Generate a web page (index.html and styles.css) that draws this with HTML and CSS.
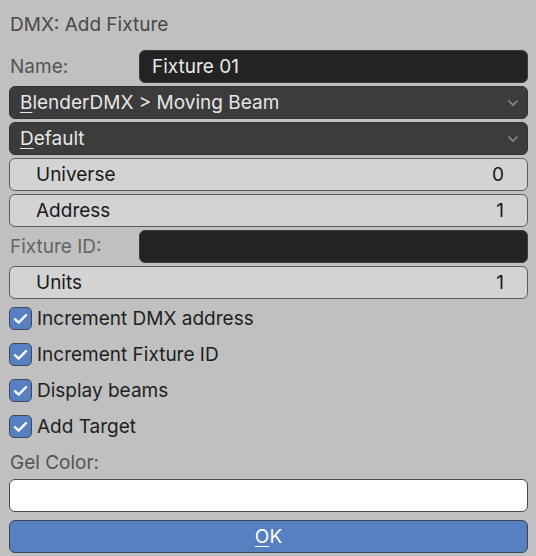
FILE: index.html
```html
<!DOCTYPE html>
<html>
<head>
<meta charset="utf-8">
<link rel="stylesheet" href="styles.css">
</head>
<body>
<div class="panel">
  <div class="title">DMX: Add Fixture</div>
  <div class="rows">
    <div class="split">
      <span class="label">Name:</span>
      <div class="field text-field">Fixture 01</div>
    </div>
    <div class="field dropdown"><span><u>B</u>lenderDMX &gt; Moving Beam</span>
      <svg class="chev" width="12" height="8" viewBox="0 0 12 8"><path d="M1.5 1.5 L6 6 L10.5 1.5" fill="none" stroke="#8a8a8a" stroke-width="1.6"/></svg>
    </div>
    <div class="field dropdown"><span><u>D</u>efault</span>
      <svg class="chev" width="12" height="8" viewBox="0 0 12 8"><path d="M1.5 1.5 L6 6 L10.5 1.5" fill="none" stroke="#8a8a8a" stroke-width="1.6"/></svg>
    </div>
    <div class="field number"><span>Universe</span><span>0</span></div>
    <div class="field number"><span>Address</span><span>1</span></div>
    <div class="split">
      <span class="label light">Fixture ID:</span>
      <div class="field text-field"></div>
    </div>
    <div class="field number"><span>Units</span><span>1</span></div>
    <label class="check"><span class="box"><svg width="15" height="12" viewBox="0 0 15 12"><path d="M2 6.2 L5.6 9.6 L13 2.2" fill="none" stroke="#fff" stroke-width="2.4" stroke-linecap="round" stroke-linejoin="round"/></svg></span>Increment DMX address</label>
    <label class="check"><span class="box"><svg width="15" height="12" viewBox="0 0 15 12"><path d="M2 6.2 L5.6 9.6 L13 2.2" fill="none" stroke="#fff" stroke-width="2.4" stroke-linecap="round" stroke-linejoin="round"/></svg></span>Increment Fixture ID</label>
    <label class="check"><span class="box"><svg width="15" height="12" viewBox="0 0 15 12"><path d="M2 6.2 L5.6 9.6 L13 2.2" fill="none" stroke="#fff" stroke-width="2.4" stroke-linecap="round" stroke-linejoin="round"/></svg></span>Display beams</label>
    <label class="check"><span class="box"><svg width="15" height="12" viewBox="0 0 15 12"><path d="M2 6.2 L5.6 9.6 L13 2.2" fill="none" stroke="#fff" stroke-width="2.4" stroke-linecap="round" stroke-linejoin="round"/></svg></span>Add Target</label>
    <div class="gel">
      <span class="label">Gel Color:</span>
      <div class="field color"></div>
    </div>
  </div>
  <div class="field ok"><span><u>O</u>K</span></div>
</div>
</body>
</html>
```

FILE: styles.css
```css
html, body {
  margin: 0;
  padding: 0;
  background: #c0c0c0;
}
body {
  font-family: Inter, "Noto Sans", sans-serif;
  font-size: 19px;
  color: #1c1c1c;
}
.panel {
  width: 536px;
  height: 556px;
  box-sizing: border-box;
  padding: 8px 8px 0 9px;
}
.title {
  height: 33px;
  line-height: 33px;
  padding-left: 1px;
  color: #4a4a4a;
  margin-bottom: 9px;
}
.rows {
  display: flex;
  flex-direction: column;
  gap: 3px;
}
.split {
  display: grid;
  grid-template-columns: 130px 1fr;
  height: 33px;
}
.label {
  display: flex;
  align-items: center;
  padding-left: 1px;
  color: #545454;
  height: 33px;
}
.label.light {
  color: #646464;
}
.field {
  height: 33px;
  box-sizing: border-box;
  border-radius: 6px;
  display: flex;
  align-items: center;
}
.text-field {
  background: #232323;
  border: 1px solid #3c3c3c;
  color: #e8e8e8;
  padding-left: 12px;
}
.dropdown {
  background: #3c3c3c;
  border: 1px solid #333;
  color: #e6e6e6;
  padding: 0 8px 0 10px;
  justify-content: space-between;
}
.dropdown u, .ok u {
  text-underline-offset: 3px;
  text-decoration-thickness: 1px;
}
.chev {
  margin-top: 1px;
}
.number {
  background: #d3d3d3;
  border: 1px solid #5c5c5c;
  justify-content: space-between;
  padding: 0 23px 0 26px;
  color: #1a1a1a;
}
.check {
  display: flex;
  align-items: center;
  gap: 5px;
  height: 33px;
  color: #1f1f1f;
}
.box {
  width: 23px;
  height: 23px;
  box-sizing: border-box;
  border-radius: 5px;
  background: #5680c2;
  border: 1px solid #3f4a5c;
  display: flex;
  align-items: center;
  justify-content: center;
}
.box svg {
  display: block;
}
.gel {
  display: flex;
  flex-direction: column;
}
.color {
  background: #ffffff;
  border: 1px solid #4a4a4a;
}
.ok {
  margin-top: 8px;
  background: #5680c2;
  border: 1px solid #3a4556;
  color: #ffffff;
  justify-content: center;
}
```
